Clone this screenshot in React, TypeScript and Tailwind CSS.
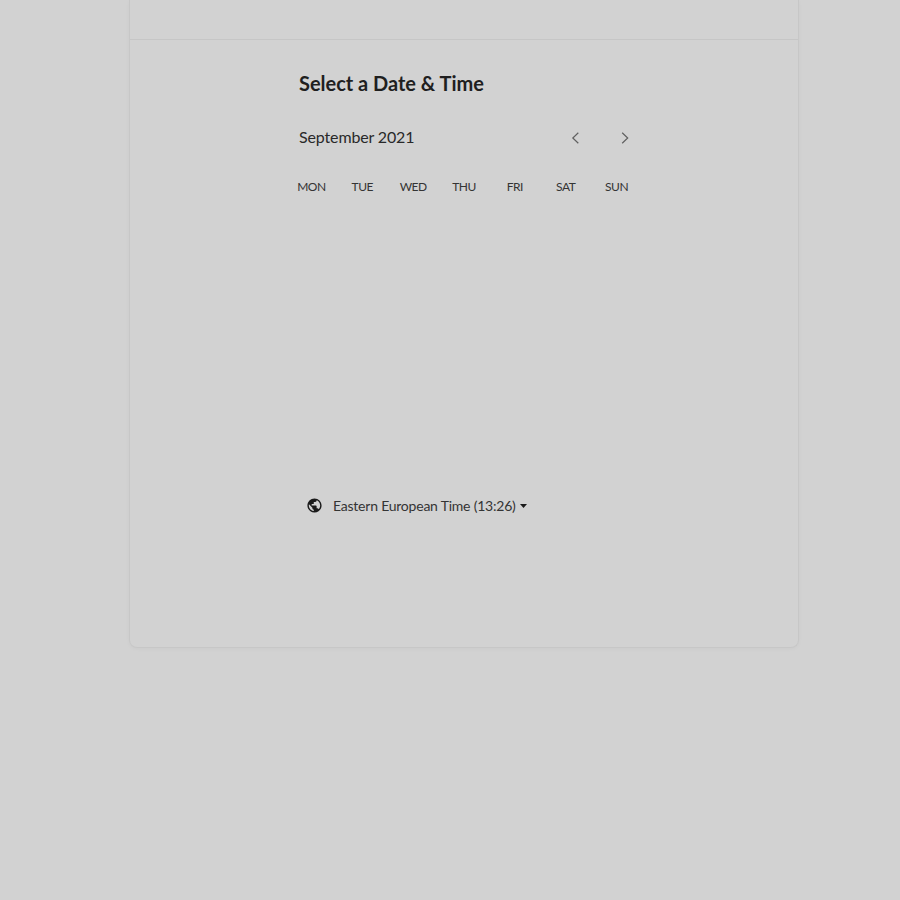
import { MdPublic } from "react-icons/md";

const days = ["MON", "TUE", "WED", "THU", "FRI", "SAT", "SUN"];

function Chevron({ direction }: { direction: "left" | "right" }) {
  return (
    <svg width="8" height="12" viewBox="0 0 8 12" fill="none" stroke="#606060" strokeWidth="1.2">
      <path d={direction === "left" ? "M7.3 0.7 1.8 6l5.5 5.3" : "M1.2 0.7 6.7 6l-5.5 5.3"} />
    </svg>
  );
}

export default function App() {
  return (
    <main className="h-[900px] w-[900px] overflow-hidden bg-[#d2d2d2] font-['Lato',sans-serif] text-[#1f1f1f]">
      <div className="ml-[129px] h-[648px] w-[670px] rounded-b-lg border-x border-b border-[#c7c7c7] shadow-[0_1px_4px_rgba(0,0,0,0.03)]">
        <div className="h-10 border-b border-[#c6c6c6]" />
        <section className="ml-[168px] w-[340px] pt-[29px]">
          <h1 className="h-7 whitespace-nowrap pl-px text-[20px] font-bold leading-7 tracking-[-0.02px]">
            Select a Date &amp; Time
          </h1>
          <div className="mt-[29px] flex h-6 items-center">
            <span className="w-[273px] whitespace-nowrap pb-0.5 pl-px text-[16px] leading-[22px] tracking-[-0.14px] text-[#292929]">
              September 2021
            </span>
            <button aria-label="Previous month" className="mr-[42px]">
              <Chevron direction="left" />
            </button>
            <button aria-label="Next month">
              <Chevron direction="right" />
            </button>
          </div>
          <div className="-ml-[12px] mt-[27px] grid w-[356px] grid-cols-7 text-center text-[12px] leading-5 tracking-[-0.5px] text-[#343434]">
            {days.map((day) => (
              <span key={day}>{day}</span>
            ))}
          </div>
          <button className="ml-[8px] mt-[299px] flex h-5 items-center whitespace-nowrap text-[14px] leading-5 tracking-[-0.22px] text-[#343434]">
            <MdPublic size={17} className="mb-0.5 mr-[10px] text-[#1a1a1a]" />
            <span>Eastern European Time (13:26)</span>
            <svg width="7" height="4" viewBox="0 0 7 4" className="ml-1 fill-[#1a1a1a]">
              <path d="M0 0h7L3.5 4z" />
            </svg>
          </button>
        </section>
      </div>
    </main>
  );
}
